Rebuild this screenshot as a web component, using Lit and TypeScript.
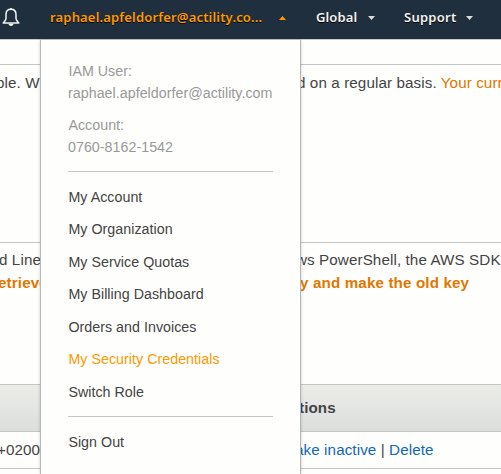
import { LitElement, html, css } from "lit";
import { customElement } from "lit/decorators.js";

const MENU_ITEMS = [
  "My Account",
  "My Organization",
  "My Service Quotas",
  "My Billing Dashboard",
  "Orders and Invoices",
  "My Security Credentials",
  "Switch Role",
];

@customElement("console-nav")
export class ConsoleNav extends LitElement {
  static styles = css`
    :host {
      display: flex;
      align-items: center;
      box-sizing: border-box;
      height: 39px;
      padding-bottom: 5px;
      background: #202f3e;
      color: #f4f4f0;
      font: 600 13px/18px "Noto Sans", "Open Sans", sans-serif;
      text-shadow: 0 1px 0 #000;
      white-space: nowrap;
    }
    .bell { width: 20px; height: 20px; margin-left: 1px; margin-right: 29px; flex: none; }
    .user { color: #ff9900; width: 229px; letter-spacing: 0.17px; }
    .caret { width: 7px; height: 4px; flex: none; margin-top: 1px; }
    .up { fill: #ff9900; margin-right: 30px; }
    .down { fill: #dcdcd6; }
    .region { width: 52px; letter-spacing: 0.1px; }
    .region-caret { margin-right: 29px; }
    .support { width: 62px; letter-spacing: 0.25px; }
  `;

  render() {
    return html`
      <svg class="bell" viewBox="0 0 20 20" fill="none" stroke="#f4f4f0" stroke-width="1.5" stroke-linejoin="round">
        <path d="M10 2.3C6.8 2.3 5 4.6 5 7.5V11.5C5 13.2 3.5 14.5 2.2 16H17.8C16.5 14.5 15 13.2 15 11.5V7.5C15 4.6 13.2 2.3 10 2.3Z" />
        <path d="M7.5 16.7H12.5C12.2 19.6 7.8 19.6 7.5 16.7Z" fill="#f4f4f0" stroke="none" />
        <path d="M10 1V2.5" />
      </svg>
      <span class="user">raphael.apfeldorfer@actility.co...</span>
      <svg class="caret up" viewBox="0 0 7 4"><path d="M0 4L3.5 0L7 4Z" /></svg>
      <span class="region">Global</span>
      <svg class="caret down region-caret" viewBox="0 0 7 4"><path d="M0 0H7L3.5 4Z" /></svg>
      <span class="support">Support</span>
      <svg class="caret down" viewBox="0 0 7 4"><path d="M0 0H7L3.5 4Z" /></svg>
    `;
  }
}

@customElement("account-menu")
export class AccountMenu extends LitElement {
  static styles = css`
    :host {
      display: block;
      box-sizing: border-box;
      width: 261px;
      height: 434px;
      padding: 20px 27px 0;
      background: #fefefc;
      border: solid #b4b8b8;
      border-width: 0 1px;
      box-shadow: 0 0 3px rgba(0, 0, 0, 0.2);
      color: #444;
      font: 14.25px/22px "Liberation Sans", Arial, sans-serif;
      letter-spacing: 0.03px;
      white-space: nowrap;
    }
    .info { color: #999; margin-bottom: 10px; }
    .rule { height: 1px; background: #c4c6c4; }
    .info, .item { text-indent: 0.4px; }
    .items { padding: 8.8px 0 7.7px; }
    .item { line-height: 32.5px; }
    .active { color: #ff9900; }
    .account { margin-bottom: 13px; }
    .out { padding-top: 9px; }
  `;

  render() {
    return html`
      <div class="info">IAM User:<br />raphael.apfeldorfer@actility.com</div>
      <div class="info account">Account:<br />0760-8162-1542</div>
      <div class="rule"></div>
      <div class="items">
        ${MENU_ITEMS.map(
          (t) => html`<div class="item ${t === "My Security Credentials" ? "active" : ""}">${t}</div>`
        )}
      </div>
      <div class="rule"></div>
      <div class="item out">Sign Out</div>
    `;
  }
}

@customElement("app-root")
export class AppRoot extends LitElement {
  static styles = css`
    :host {
      display: block;
      position: relative;
      height: 474px;
      overflow: hidden;
      background: #fefefc;
      color: #444;
      font: 15.2px/23px "Liberation Sans", Arial, sans-serif;
    }
    .page { border-top: 1px solid #c8caca; }
    .panel, .row {
      display: grid;
      grid-template-columns: 40px 200px;
      column-gap: 261px;
      white-space: nowrap;
    }
    .panel { border-top: 1px solid #c4c6c6; box-sizing: border-box; }
    .cell { overflow: hidden; letter-spacing: 0.1px; }
    .intro { margin-top: 24px; height: 178px; padding-top: 6px; }
    .keys { height: 142px; padding-top: 5px; grid-auto-rows: 23px; }
    .row { box-sizing: border-box; border-top: 1px solid #c4c6c6; }
    .head { height: 47px; line-height: 46px; font-weight: bold; background: linear-gradient(#ecede9, #dcdedc); }
    .data { height: 37px; line-height: 35px; }
    .end { border-top: 1px solid #c4c6c6; }
    .orange { color: #e07700; }
    .strong { font-weight: bold; letter-spacing: 0.13px; }
    .link { color: #1166bb; }
    .n1 { text-indent: -1px; }
    .n2 { text-indent: -2px; }
    .n3 { text-indent: -3px; }
    .n4 { text-indent: -4px; }
    .n5 { text-indent: -5px; }
    .n6 { text-indent: -6px; }
    .menu { position: absolute; left: 40px; top: 40px; }
  `;

  render() {
    return html`
      <console-nav></console-nav>
      <main class="page">
        <section class="panel intro">
          <div class="cell n4">ble. W</div>
          <div class="cell n4">d on a regular basis. <span class="orange">Your curr</span></div>
        </section>
        <section class="panel keys">
          <div class="cell n1">d Line</div>
          <div class="cell n5">ws PowerShell, the AWS SDK</div>
          <div class="cell orange strong n2">etrieve</div>
          <div class="cell orange strong n1">y and make the old key</div>
        </section>
        <section>
          <div class="row head">
            <div class="cell"></div>
            <div class="cell n2">tions</div>
          </div>
          <div class="row data">
            <div class="cell n3">+0200</div>
            <div class="cell n6"><span class="link">ake inactive</span> | <span class="link">Delete</span></div>
          </div>
          <div class="end"></div>
        </section>
      </main>
      <account-menu class="menu"></account-menu>
    `;
  }
}
